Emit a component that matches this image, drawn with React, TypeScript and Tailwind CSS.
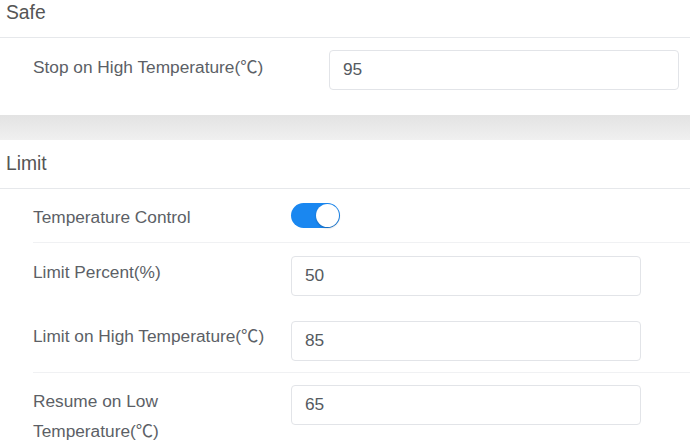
import React from "react";

const font = { fontFamily: '"Liberation Sans", Arial, "Noto Sans CJK SC", sans-serif' };

function Input({ value }: { value: string }) {
  return (
    <div className="w-[350px] h-[40px] border border-[#e2e4e8] rounded-[4px] flex items-center pl-[13px] text-[17.3px] text-[#555a60] bg-white shrink-0">
      {value}
    </div>
  );
}

function Toggle() {
  return (
    <div className="relative w-[49px] h-[25px] rounded-full bg-[#1a87f0]">
      <div className="absolute right-[1px] top-[1px] w-[23px] h-[23px] rounded-full bg-white shadow-[0_1px_2px_rgba(0,0,0,0.25)]" />
    </div>
  );
}

export default function App() {
  return (
    <div className="w-[690px] h-[447px] overflow-hidden bg-white text-[#5c5f66]" style={font}>
      {/* Safe */}
      <div className="h-[38px] border-b border-[#e6e8eb] pl-[6px] flex items-start">
        <span className="text-[19.3px] leading-[26px] text-[#555]">Safe</span>
      </div>
      <div className="pl-[33px] pt-[12px] pb-[25px] flex items-start">
        <div className="w-[296px] pt-[2px] text-[17.3px] leading-[30px]">Stop on High Temperature(℃)</div>
        <Input value="95" />
      </div>
      <div className="h-[25px] bg-gradient-to-b from-[#e3e3e3] to-[#f0f0f0]" />

      {/* Limit */}
      <div className="h-[49px] border-b border-[#e6e8eb] pl-[6px] flex items-center">
        <span className="text-[19.3px] text-[#555]">Limit</span>
      </div>
      <div className="pl-[33px]">
        <div className="h-[54px] border-b border-[#f0f1f3] flex items-center">
          <div className="w-[258px] pt-[3px] text-[17.3px] leading-[30px]">Temperature Control</div>
          <Toggle />
        </div>
        <div className="pt-[13px] pb-[12px] flex items-start">
          <div className="w-[244px] mr-[14px] pt-[1px] text-[17.3px] leading-[30px]">Limit Percent(%)</div>
          <Input value="50" />
        </div>
        <div className="pt-[13px] pb-[11px] border-b border-[#f0f1f3] flex items-start">
          <div className="w-[244px] mr-[14px] text-[17.3px] leading-[30px]">Limit on High Temperature(℃)</div>
          <Input value="85" />
        </div>
        <div className="pt-[12px] pb-[12px] flex items-start">
          <div className="w-[244px] mr-[14px] pt-[1px] text-[17.3px] leading-[30px]">Resume on Low Temperature(℃)</div>
          <Input value="65" />
        </div>
      </div>
    </div>
  );
}
